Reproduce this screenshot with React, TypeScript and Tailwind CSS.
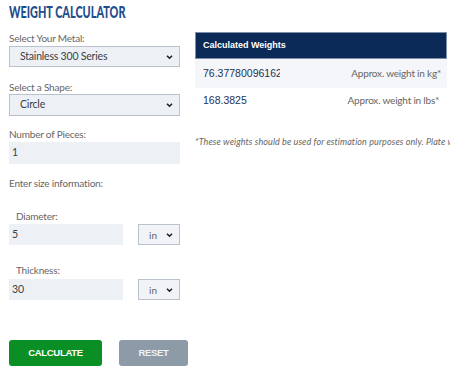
import React from "react";

const sans = "font-['Lato','Open_Sans',sans-serif]";
const arial = "font-['Liberation_Sans',Arial,sans-serif]";

function Chevron() {
  return (
    <svg width="7" height="5" viewBox="0 0 7 5" className="absolute right-[6px] top-1/2 -translate-y-1/2 pointer-events-none">
      <path d="M1 1.2 L3.5 3.7 L6 1.2" stroke="#222" strokeWidth="1.6" fill="none" />
    </svg>
  );
}

function Select({ value, h = "h-[21px]" }: { value: string; h?: string }) {
  return (
    <div className={`relative ${h} w-full border border-[#b9c1cc] bg-[#edf0f5]`}>
      <span className="absolute left-[10px] top-1/2 -translate-y-1/2 text-[10.5px] tracking-[-0.2px] text-[#3a3f47]">
        {value}
      </span>
      <Chevron />
    </div>
  );
}

function Field({ value, h = "h-[21px]" }: { value: string; h?: string }) {
  return (
    <div className={`${h} w-full bg-[#edf0f5] flex items-center pl-[3px] text-[10.5px] text-[#3a3f47]`}>{value}</div>
  );
}

function Unit() {
  return (
    <div className="relative h-[21px] w-[42px] shrink-0 border border-[#b9c1cc] bg-[#f1f3f7]">
      <span className="absolute left-[10px] top-1/2 -translate-y-1/2 text-[10px] text-[#666]">in</span>
      <Chevron />
    </div>
  );
}

function Label({ children, className = "" }: { children: React.ReactNode; className?: string }) {
  return <p className={`text-[10px] leading-[14px] tracking-[-0.2px] text-[#666] ${className}`}>{children}</p>;
}

export default function App() {
  return (
    <div className={`w-[450px] h-[386px] overflow-hidden bg-white ${sans}`}>
      <div className="flex pl-[9px] pt-[2px]">
        <div className="w-[171px] shrink-0">
          <h1 className="whitespace-nowrap origin-left scale-x-[0.64] font-black text-[17px] leading-[20px] text-[#1f4e8c]">
            WEIGHT CALCULATOR
          </h1>
          <Label className="mt-[9px]">Select Your Metal:</Label>
          <div className="mt-[1px]">
            <Select value="Stainless 300 Series" />
          </div>
          <Label className="mt-[13px]">Select a Shape:</Label>
          <Select value="Circle" h="h-[22px]" />
          <Label className="mt-[11px]">Number of Pieces:</Label>
          <div className="mt-[1px]">
            <Field value="1" h="h-[22px]" />
          </div>
          <Label className="mt-[12px]">Enter size information:</Label>
          <Label className="mt-[19px] pl-[7px]">Diameter:</Label>
          <div className="mt-[1px] flex items-center gap-[15px]">
            <div className="w-[114px] shrink-0">
              <Field value="5" />
            </div>
            <Unit />
          </div>
          <Label className="mt-[18px] pl-[7px]">Thickness:</Label>
          <div className="mt-[2px] flex items-center gap-[15px]">
            <div className="w-[114px] shrink-0">
              <Field value="30" />
            </div>
            <Unit />
          </div>
          <div className="mt-[40px] flex gap-[17px]">
            <button className={`h-[26px] w-[93px] shrink-0 rounded-[3px] bg-[#0a8f24] text-white text-[9.5px] font-bold tracking-[-0.3px] ${arial}`}>
              CALCULATE
            </button>
            <button className={`h-[26px] w-[69px] shrink-0 rounded-[3px] bg-[#8d9aa7] text-[#eef2f6] text-[9.5px] font-bold tracking-[-0.3px] ${arial}`}>
              RESET
            </button>
          </div>
        </div>

        <div className="ml-[15px] w-[252px] shrink-0 pt-[30px]">
          <div className={`h-[27px] bg-[#0b2a57] border border-[#7d8ea6] flex items-center pl-[7px] text-white text-[9px] font-bold ${arial}`}>
            Calculated Weights
          </div>
          <div className="h-[29px] bg-[#f5f6f9] flex items-center justify-between pl-[8px] pr-[6px]">
            <span className={`w-[77px] overflow-hidden whitespace-nowrap text-[10.5px] text-[#1b3358] ${arial}`}>
              76.3778009616238
            </span>
            <span className="text-[10px] tracking-[-0.2px] text-[#666]">Approx. weight in kg*</span>
          </div>
          <div className="h-[25px] flex items-center justify-between pl-[8px] pr-[8px]">
            <span className={`w-[77px] overflow-hidden whitespace-nowrap text-[10.5px] text-[#1b3358] ${arial}`}>
              168.3825
            </span>
            <span className="text-[10px] tracking-[-0.2px] text-[#666]">Approx. weight in lbs*</span>
          </div>
          <p className="mt-[22px] whitespace-nowrap italic text-[9px] tracking-[0.1px] text-[#666]">
            *These weights should be used for estimation purposes only. Plate weights may vary.
          </p>
        </div>
      </div>
    </div>
  );
}
